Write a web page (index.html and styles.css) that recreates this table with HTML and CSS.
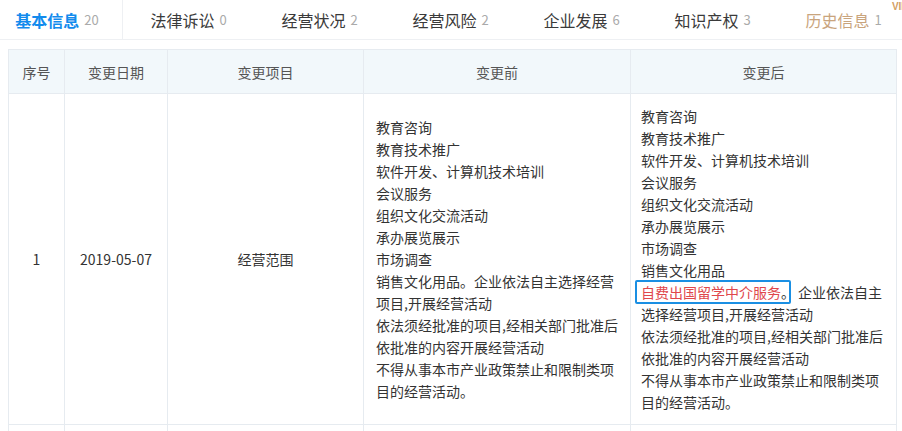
FILE: index.html
```html
<!DOCTYPE html>
<html lang="zh-CN">
<head>
<meta charset="utf-8">
<title>历史信息</title>
<link rel="stylesheet" href="styles.css">
</head>
<body>
<div class="tabs">
  <div class="tab active">基本信息<span class="cnt">20</span></div>
  <div class="tab">法律诉讼<span class="cnt">0</span></div>
  <div class="tab">经营状况<span class="cnt">2</span></div>
  <div class="tab">经营风险<span class="cnt">2</span></div>
  <div class="tab">企业发展<span class="cnt">6</span></div>
  <div class="tab">知识产权<span class="cnt">3</span></div>
  <div class="tab history">历史信息<span class="cnt">1</span></div>
  <span class="vip">VIP</span>
</div>
<table class="grid">
  <colgroup>
    <col class="c1"><col class="c2"><col class="c3"><col class="c4"><col class="c5">
  </colgroup>
  <thead>
    <tr><th>序号</th><th>变更日期</th><th>变更项目</th><th>变更前</th><th>变更后</th></tr>
  </thead>
  <tbody>
    <tr class="main">
      <td class="ctr">1</td>
      <td class="ctr">2019-05-07</td>
      <td class="ctr">经营范围</td>
      <td class="before">
        <div>教育咨询</div>
        <div>教育技术推广</div>
        <div>软件开发、计算机技术培训</div>
        <div>会议服务</div>
        <div>组织文化交流活动</div>
        <div>承办展览展示</div>
        <div>市场调查</div>
        <div>销售文化用品。企业依法自主选择经营</div>
        <div>项目,开展经营活动</div>
        <div>依法须经批准的项目,经相关部门批准后</div>
        <div>依批准的内容开展经营活动</div>
        <div>不得从事本市产业政策禁止和限制类项</div>
        <div>目的经营活动。</div>
      </td>
      <td class="after">
        <div>教育咨询</div>
        <div>教育技术推广</div>
        <div>软件开发、计算机技术培训</div>
        <div>会议服务</div>
        <div>组织文化交流活动</div>
        <div>承办展览展示</div>
        <div>市场调查</div>
        <div>销售文化用品</div>
        <div><span class="hl"><span class="red">自费出国留学中介服务</span><span class="dot">。</span></span>企业依法自主</div>
        <div>选择经营项目,开展经营活动</div>
        <div>依法须经批准的项目,经相关部门批准后</div>
        <div>依批准的内容开展经营活动</div>
        <div>不得从事本市产业政策禁止和限制类项</div>
        <div>目的经营活动。</div>
      </td>
    </tr>
    <tr class="next"><td></td><td></td><td></td><td></td><td></td></tr>
  </tbody>
</table>
</body>
</html>
```
FILE: styles.css
```css
html, body {
  margin: 0;
  padding: 0;
  background: #fff;
  overflow: hidden;
}
body {
  font-family: "Noto Sans CJK SC", "Noto Sans", sans-serif;
  color: #333;
  width: 902px;
  height: 431px;
}
.tabs {
  position: relative;
  display: flex;
  height: 39px;
  border-bottom: 1px solid #eef0f3;
  background: #fff;
}
.tab {
  box-sizing: border-box;
  width: 131px;
  flex: none;
  display: flex;
  align-items: center;
  justify-content: center;
  font-size: 16px;
  color: #3a3a3a;
  white-space: nowrap;
}
.tab:first-child {
  margin-left: -8px;
  border-right: 1px solid #eef0f3;
}
.tab.active {
  color: #128bed;
  font-weight: bold;
}
.tab.history {
  color: #c9a47d;
}
.cnt {
  font-size: 13px;
  color: #aaa;
  margin-left: 5px;
  font-weight: normal;
}
.vip {
  position: absolute;
  right: -6px;
  top: 1px;
  font-size: 10px;
  line-height: 12px;
  font-weight: bold;
  color: #d3a065;
  font-family: "Liberation Sans", sans-serif;
}
.grid {
  margin: 9px 0 0 8px;
  width: 888px;
  border-collapse: collapse;
  table-layout: fixed;
  font-size: 14px;
}
.c1 { width: 56px; }
.c2 { width: 103px; }
.c3 { width: 196px; }
.c4 { width: 267px; }
.c5 { width: 266px; }
.grid th, .grid td {
  border: 1px solid #e6ebf0;
  padding: 0;
}
.grid th {
  height: 43px;
  background: #f2f8fb;
  font-weight: normal;
  color: #555;
  text-align: center;
}
.grid td {
  vertical-align: middle;
  line-height: 22px;
}
.ctr {
  text-align: center;
}
.before {
  padding: 0 0 0 12px !important;
  white-space: nowrap;
}
.after {
  padding: 11px 0 11px 10px !important;
  white-space: nowrap;
}
.hl {
  display: inline-block;
  vertical-align: top;
  line-height: 20px;
  border: 2px solid #1a8fe3;
  border-radius: 2px;
  padding: 0 0 0 4px;
  margin: -1px 7px -1px -6px;
}
.red {
  color: #e0474c;
}
.dot {
  display: inline-block;
  width: 14px;
  margin-right: -6px;
}
.next td {
  height: 40px;
}
```
